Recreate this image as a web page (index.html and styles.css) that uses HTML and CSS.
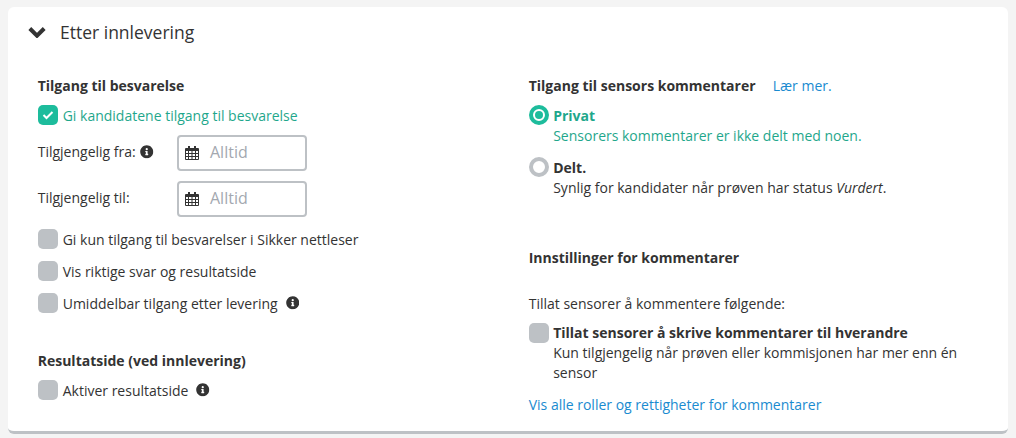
FILE: index.html
```html
<!DOCTYPE html>
<html lang="no">
<head>
<meta charset="utf-8">
<title>Etter innlevering</title>
<link rel="stylesheet" href="styles.css">
</head>
<body>
<svg class="defs" width="0" height="0" aria-hidden="true">
  <symbol id="info" viewBox="0 0 512 512"><path d="M256 8C119 8 8 119 8 256s111 248 248 248 248-111 248-248S393 8 256 8zm0 110a42 42 0 1 1 0 84 42 42 0 0 1 0-84zm56 254c0 7-5 12-12 12h-88c-7 0-12-5-12-12v-24c0-7 5-12 12-12h12v-64h-12c-7 0-12-5-12-12v-24c0-7 5-12 12-12h64c7 0 12 5 12 12v100h12c7 0 12 5 12 12z"/></symbol>
  <symbol id="cal" viewBox="0 0 14 14"><path fill-rule="evenodd" d="M3 0h2v2h4V0h2v2h2a1 1 0 0 1 1 1v10a1 1 0 0 1-1 1H1a1 1 0 0 1-1-1V3a1 1 0 0 1 1-1h2zM1 5v2h2V5zm3 0v2h2.500V5zm3.500 0v2H10V5zM11 5v2h2V5zM1 8v2h2V8zm3 0v2h2.500V8zm3.500 0v2H10V8zM11 8v2h2V8zM1 11v2h2v-2zm3 0v2h2.500v-2zm3.500 0v2H10v-2zM11 11v2h2v-2z"/></symbol>
</svg>
<section class="card">
  <header class="card-head">
    <svg class="chevron" viewBox="0 0 18 12" aria-hidden="true"><path d="M1.800 2.500 9 9.700l7.200-7.200" fill="none" stroke="currentColor" stroke-width="4"/></svg>
    <h2 class="card-title">Etter innlevering</h2>
  </header>
  <div class="columns">
    <div class="col-left">
      <h3 class="heading">Tilgang til besvarelse</h3>
      <label class="check-row active first">
        <span class="box on"><svg viewBox="0 0 12 10" aria-hidden="true"><path d="M1.500 5 4.500 8 10.500 2" fill="none" stroke="#fff" stroke-width="2"/></svg></span>
        <span class="check-text">Gi kandidatene tilgang til besvarelse</span>
      </label>
      <div class="date-row">
        <span class="date-label">Tilgjengelig fra: <svg class="info tight"><use href="#info"/></svg></span>
        <span class="date-input"><svg class="cal"><use href="#cal"/></svg><span class="date-value">Alltid</span></span>
      </div>
      <div class="date-row">
        <span class="date-label">Tilgjengelig til:</span>
        <span class="date-input"><svg class="cal"><use href="#cal"/></svg><span class="date-value">Alltid</span></span>
      </div>
      <label class="check-row spaced"><span class="box"></span><span class="check-text">Gi kun tilgang til besvarelser i Sikker nettleser</span></label>
      <label class="check-row spaced"><span class="box"></span><span class="check-text">Vis riktige svar og resultatside</span></label>
      <label class="check-row spaced"><span class="box"></span><span class="check-text">Umiddelbar tilgang etter levering</span><svg class="info"><use href="#info"/></svg></label>
      <h3 class="heading result-heading">Resultatside (ved innlevering)</h3>
      <label class="check-row first"><span class="box"></span><span class="check-text">Aktiver resultatside</span><svg class="info"><use href="#info"/></svg></label>
    </div>
    <div class="col-right">
      <h3 class="heading">Tilgang til sensors kommentarer <a class="link learn" href="#">Lær mer.</a></h3>
      <div class="option selected first-option">
        <span class="radio on"></span>
        <div class="option-text offset"><strong>Privat</strong><p>Sensorers kommentarer er ikke delt med noen.</p></div>
      </div>
      <div class="option second-option">
        <span class="radio"></span>
        <div class="option-text offset"><strong>Delt.</strong><p>Synlig for kandidater når prøven har status <em>Vurdert</em>.</p></div>
      </div>
      <h3 class="heading settings-heading">Innstillinger for kommentarer</h3>
      <p class="lead">Tillat sensorer å kommentere følgende:</p>
      <div class="option third-option">
        <span class="box"></span>
        <div class="option-text narrow"><strong>Tillat sensorer å skrive kommentarer til hverandre</strong><p>Kun tilgjengelig når prøven eller kommisjonen har mer enn én sensor</p></div>
      </div>
      <a class="link all-roles" href="#">Vis alle roller og rettigheter for kommentarer</a>
    </div>
  </div>
</section>
</body>
</html>
```
FILE: styles.css
```css
* { box-sizing: border-box; }
html, body { height: 100%; }
body {
  margin: 0;
  padding: 7px 8px 0;
  background: #f4f4f4;
  color: #333;
  font: 14px/20px "Open Sans", sans-serif;
  overflow: hidden;
}
.defs { position: absolute; }
h2, h3, p { margin: 0; }
.card {
  height: 427px;
  background: #fff;
  border-bottom: 3px solid #bdc1c5;
  border-radius: 6px;
  padding: 13px 0 0 20px;
}
.card-head { display: flex; align-items: center; height: 24px; }
.chevron { width: 18px; height: 12px; color: #333; margin-right: 14px; }
.card-title { font-size: 17.5px; line-height: 24px; font-weight: 400; }
.columns { display: flex; margin-top: 32px; padding-left: 9.700px; }
.col-left { width: 491px; }
.col-right { width: 440px; }
.heading { font-size: 14px; line-height: 20px; font-weight: 700; }
.check-row { display: flex; align-items: center; height: 20px; }
.check-row.first { margin-top: 9px; }
.check-row.spaced { margin-top: 12px; }
.check-row.active { color: #1fa78c; }
.check-text { padding-top: 2px; }
.box {
  flex: none;
  width: 20px;
  height: 20px;
  margin-right: 5px;
  border-radius: 5px;
  background: #bdc1c5;
  display: flex;
  align-items: center;
  justify-content: center;
}
.box.on { background: #1dbc9c; }
.box svg { width: 12px; height: 10px; }
.info { width: 13.500px; height: 13.500px; margin-left: 8px; fill: #333; flex: none; }
.info.tight { margin-left: 1px; vertical-align: -1.500px; }
.date-row { display: flex; align-items: center; height: 36px; margin-top: 10px; }
.date-label { width: 139.300px; padding-bottom: 2px; }
.date-input {
  width: 130px;
  height: 36px;
  display: flex;
  align-items: center;
  border: 2px solid #bdc1c5;
  border-radius: 4px;
  padding-left: 6px;
  color: #a3a8b0;
  font-size: 16px;
}
.date-value { padding-bottom: 2px; }
.cal { width: 14px; height: 14px; fill: #333; margin: 0 11px 1px 0; flex: none; }
.result-heading { margin-top: 38px; }
.link { color: #1a8bd0; text-decoration: none; font-weight: 400; }
.learn { margin-left: 13.500px; }
.option { display: flex; align-items: flex-start; }
.option .box { margin-right: 4.500px; }
.option-text strong { display: block; }
.offset { padding-top: 1px; }
.selected .option-text, .selected strong { color: #1fa78c; }
.first-option { margin-top: 9px; }
.second-option { margin-top: 11px; }
.radio {
  flex: none;
  width: 20px;
  height: 20px;
  margin-right: 4.500px;
  border-radius: 50%;
  border: 4px solid #bdc1c5;
  background: #fff;
}
.radio.on { border-color: #1dbc9c; position: relative; }
.radio.on::after {
  content: "";
  position: absolute;
  left: 2px;
  top: 2px;
  width: 8px;
  height: 8px;
  border-radius: 50%;
  background: #1dbc9c;
}
.settings-heading { margin-top: 50px; }
.lead { margin-top: 26px; }
.third-option { margin-top: 9px; }
.narrow { width: 420px; }
.all-roles { display: block; margin-top: 12px; }
```
